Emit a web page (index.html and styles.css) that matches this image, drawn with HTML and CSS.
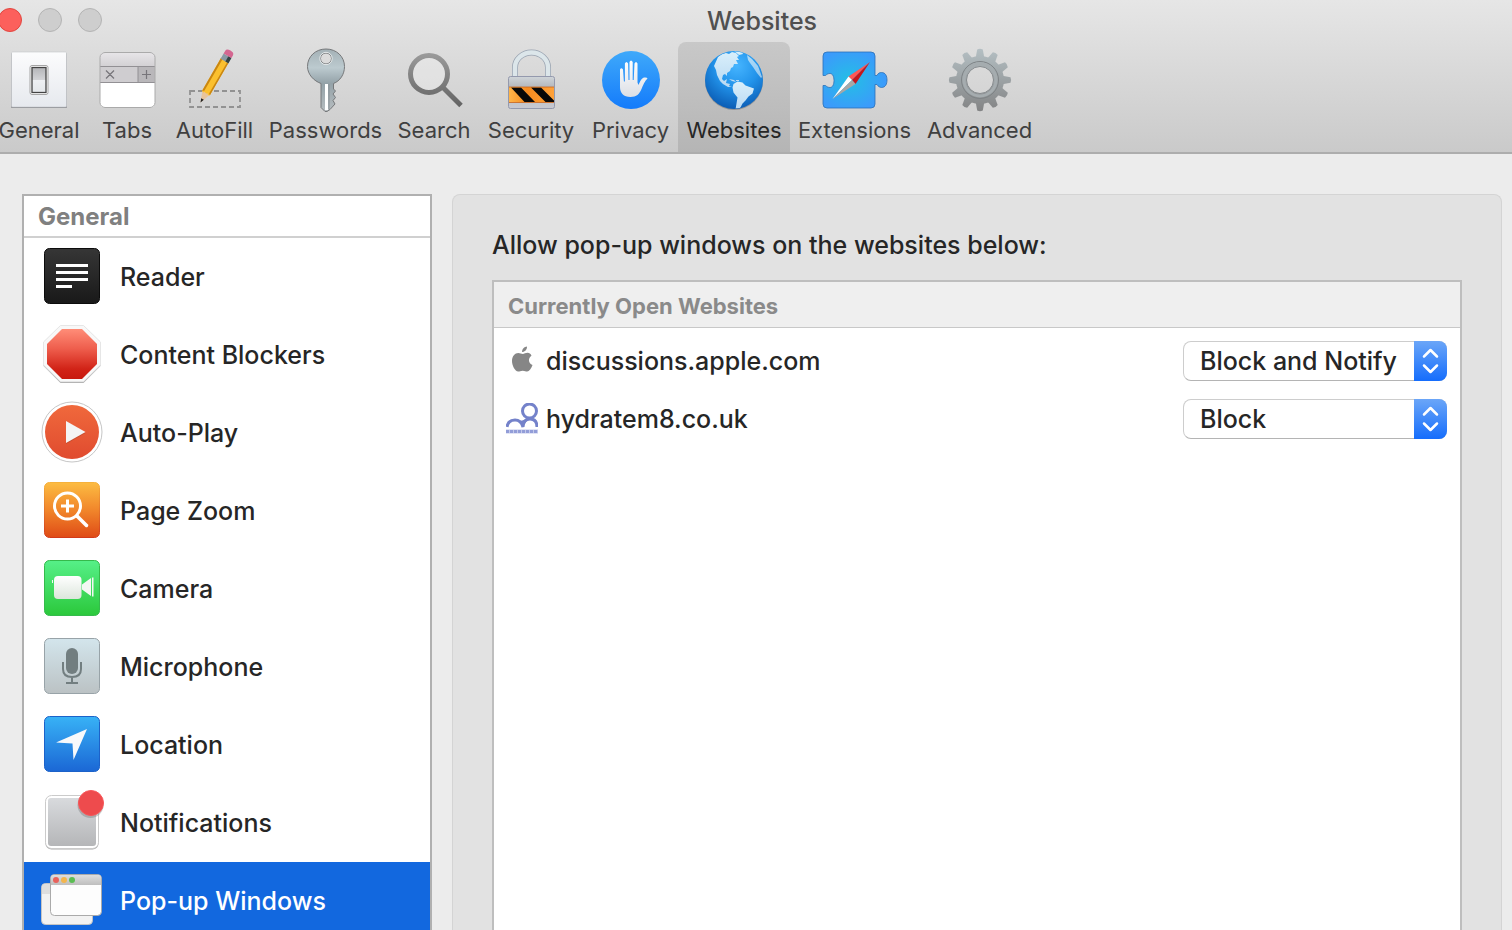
FILE: index.html
```html
<!DOCTYPE html>
<html lang="en">
<head>
<meta charset="utf-8">
<title>Websites</title>
<link rel="stylesheet" href="styles.css">
</head>
<body>
<header class="header">
  <div class="titlebar">
    <div class="lights">
      <button class="light light-close" aria-label="Close"></button>
      <button class="light" aria-label="Minimize"></button>
      <button class="light" aria-label="Zoom"></button>
    </div>
    <h1 class="title">Websites</h1>
  </div>
  <nav class="toolbar" aria-label="Preferences">
    <button class="tool">
      <svg class="tool-icon" viewBox="0 0 72 64">
        <defs>
          <linearGradient id="gen" x2="0" y2="1"><stop stop-color="#fcfcfd"/><stop offset="1" stop-color="#e6e9ee"/></linearGradient>
          <linearGradient id="sw" x2="0" y2="1"><stop stop-color="#b4b5b8"/><stop offset=".48" stop-color="#d2d3d6"/><stop offset=".5" stop-color="#eef0f3"/><stop offset="1" stop-color="#e4e7ea"/></linearGradient>
        </defs>
        <rect x="8" y="5" width="56" height="55" rx="1" fill="#8c8e92"/>
        <rect x="8.500" y="4" width="55" height="55" rx="1" fill="url(#gen)" stroke="#c4c6ca" stroke-width=".600"/>
        <rect x="27" y="17.500" width="18" height="29" rx="2" fill="#fff" stroke="#a5a5a5"/>
        <rect x="29" y="19.500" width="14" height="25" fill="url(#sw)" stroke="#444" stroke-width="1.300"/>
      </svg>
      <span>General</span>
    </button>
    <button class="tool">
      <svg class="tool-icon" viewBox="0 0 72 64">
        <defs>
          <linearGradient id="tb" x2="0" y2="1"><stop stop-color="#e8e6e9"/><stop offset="1" stop-color="#d3d1d4"/></linearGradient>
          <clipPath id="tabclip"><rect x="9" y="4" width="55" height="56" rx="5"/></clipPath>
        </defs>
        <g clip-path="url(#tabclip)">
          <path fill="#fff" d="M9 4h55v56H9z"/>
          <path fill="url(#tb)" d="M9 4h55v14H9z"/>
          <path fill="#cfcdd0" d="M9 18h55v16H9z"/>
          <path fill="#b9b7ba" d="M47 18h17v16H47z"/>
          <path fill="none" stroke="#929094" d="M9 18.500h55M9 34.500h55M47 18v16"/>
        </g>
        <rect x="9" y="4.500" width="55" height="55" rx="5" fill="none" stroke="#aaa"/>
        <path d="M15 22.500l8 8m0-8l-8 8M51 26.500h9M55.500 22v9" fill="none" stroke="#77757a" stroke-width="1.200"/>
      </svg>
      <span>Tabs</span>
    </button>
    <button class="tool">
      <svg class="tool-icon" viewBox="0 0 72 64">
        <rect x="11" y="43" width="50" height="16" fill="none" stroke="#929292" stroke-width="1.800" stroke-dasharray="5 3"/>
        <g transform="translate(21.500 54.500) rotate(30)">
          <path d="M0 0L-4.500-12h9z" fill="#e8c49c"/>
          <path d="M0 0L-1.500-4h3z" fill="#222"/>
          <path d="M-4.500-11V-49h9v38q-2 2-3-.500-1.500 2-3 0-1 2.500-3 .500z" fill="#fbc02e"/>
          <path d="M-4.500-11V-49h2v37zM3-49h1.500v38L3-12z" fill="#c98612"/>
          <path d="M-4.500-54h9v6h-9z" fill="#8999a4"/>
          <path d="M1-54h3.500v6H1z" fill="#334444"/>
          <path d="M-4.500-54v-3q0-3 4.500-3t4.500 3v3z" fill="#d46791"/>
        </g>
      </svg>
      <span>AutoFill</span>
    </button>
    <button class="tool">
      <svg class="tool-icon" viewBox="0 0 72 64">
        <defs><linearGradient id="key" x2="0" y2="1"><stop stop-color="#a4b1b6"/><stop offset=".3" stop-color="#bccacf"/><stop offset=".55" stop-color="#94a2a8"/><stop offset="1" stop-color="#b7bdc0"/></linearGradient></defs>
        <path fill-rule="evenodd" d="M36 1c10.500 0 18.500 7.500 18.500 17.500 0 8-4.500 14.500-11 17v5.500l2 2-2.500 3 2.500 3.500-2.500 3 2 3.500-5 5.500-3 2h-2l-4-4V35.500c-7-2.500-13.500-9-13.500-17C17.500 8.500 25.500 1 36 1zm0 4a5.500 5.500 0 1 0 0 11 5.500 5.500 0 0 0 0-11z" fill="url(#key)" stroke="#76787a"/>
        <circle cx="36" cy="10.500" r="6.200" fill="none" stroke="#e4e9ea"/>
        <path d="M35 36h3v26h-3z" fill="#fff"/>
        <path d="M39 36v25" stroke="#899196"/>
      </svg>
      <span>Passwords</span>
    </button>
    <button class="tool">
      <svg class="tool-icon" viewBox="0 0 72 64">
        <defs><linearGradient id="mag" gradientUnits="userSpaceOnUse" x1="0" y1="5" x2="0" y2="58"><stop stop-color="#9b9b9b"/><stop offset="1" stop-color="#646464"/></linearGradient></defs>
        <circle cx="31" cy="26" r="18.500" fill="#fff" fill-opacity=".25" stroke="url(#mag)" stroke-width="5"/>
        <path d="M44.500 39L63 57.500" stroke="url(#mag)" stroke-width="5"/>
      </svg>
      <span>Search</span>
    </button>
    <button class="tool">
      <svg class="tool-icon" viewBox="0 0 72 64">
        <defs>
          <linearGradient id="lk" x2="0" y2="1"><stop stop-color="#d0d5d9"/><stop offset=".3" stop-color="#b6babf"/><stop offset="1" stop-color="#c7c9d2"/></linearGradient>
          <linearGradient id="or"><stop stop-color="#ffb54a"/><stop offset=".4" stop-color="#f58a1f"/><stop offset="1" stop-color="#ffa23a"/></linearGradient>
        </defs>
        <path d="M20 29V19.500a16.500 15 0 0 1 33 0V29" fill="none" stroke="#98a2b0" stroke-width="6"/>
        <path d="M20 29V19.500a16.500 15 0 0 1 33 0V29" fill="none" stroke="#dce6ea" stroke-width="4.500"/>
        <rect x="13.500" y="28.500" width="46" height="32" rx="2" fill="url(#lk)" stroke="#9499ad"/>
        <path d="M14 39h45v15.500H14z" fill="url(#or)"/>
        <path d="M16 39.500h10l14 14.500H29.500zM36 39.500h10l13 13v1.500h-8.500z" fill="#080808"/>
        <path d="M14 39h45M14 54.500h45" stroke="#c86420" stroke-width=".800"/>
      </svg>
      <span>Security</span>
    </button>
    <button class="tool">
      <svg class="tool-icon" viewBox="0 0 72 64">
        <defs>
          <linearGradient id="pv" x2="0" y2="1"><stop stop-color="#3fa9fa"/><stop offset="1" stop-color="#147bfb"/></linearGradient>
          <linearGradient id="hd" x2="0" y2="1"><stop stop-color="#fff"/><stop offset="1" stop-color="#dcdfe5"/></linearGradient>
        </defs>
        <circle cx="36" cy="32" r="29" fill="url(#pv)"/>
        <path d="M25 21.500q1.300-2.500 3 0l.900 12h1V15.500q1.500-3 3.200 0L33.500 32h1V14q1.500-3 3.200 0v18h1l.8-16.500q1.500-3 3 0V34.500l1 2.500c1.500-3 2.500-6.500 5.500-7.500q3-.5 3.500 1c-3 2.500-4.500 7-6 10.500-2 5-5 8-11 8-7 0-10.500-4-10.500-10z" fill="url(#hd)"/>
      </svg>
      <span>Privacy</span>
    </button>
    <button class="tool tool-selected" aria-current="page">
      <svg class="tool-icon" viewBox="0 0 72 64">
        <defs>
          <radialGradient id="gl" cx=".55" cy=".25" r=".75"><stop stop-color="#46b5ff"/><stop offset=".5" stop-color="#2293ea"/><stop offset="1" stop-color="#0b5db5"/></radialGradient>
          <linearGradient id="land" x2="0" y2="1"><stop stop-color="#d9effb"/><stop offset="1" stop-color="#b9d9f2"/></linearGradient>
          <clipPath id="glclip"><circle cx="36" cy="32" r="28.500"/></clipPath>
        </defs>
        <circle cx="36" cy="33" r="29" fill="#555" opacity=".4"/>
        <circle cx="36" cy="32" r="29" fill="url(#gl)"/>
        <g clip-path="url(#glclip)" fill="url(#land)">
          <path d="M20 9l4-3 4-1 3 1 3-2 4 1 3 3-2 1 2 3-3 0 2 4-4 0-1 3-2 1-1 3-3 2 0 3-2-2-2 1-1 4 2 2 3-2-1 4 4 1-1 2 3 1-4 0-5-3-3-3-3-6-1-5-2-4z"/>
          <path d="M35.500 36l4-2.500 5 1 3 3 8.500 3-1.500 5-4 3-3 4-3 3-2 4-2 2-3 0 2-12-4-5-1-5z"/>
          <path d="M49 7l5 4 6 7 4 11-1 1-4-5-4-6-3-4-2-3z" opacity=".75"/>
          <path d="M31 31l5 1 2 2-4-1zM38 32l3 0 0 1-3 0zM36 3l8 1 1 2-4 1z"/>
        </g>
      </svg>
      <span>Websites</span>
    </button>
    <button class="tool">
      <svg class="tool-icon" viewBox="0 0 72 64">
        <defs><radialGradient id="ex" cx=".42" cy=".5" r=".55"><stop stop-color="#23bfe5"/><stop offset="1" stop-color="#3b9bfb"/></radialGradient></defs>
        <path d="M8 4h44a4 4 0 0 1 4 4v19.500h2c1-2.500 3-3 4.500-3 4 0 5.500 3.500 5.500 7.500s-1.500 7.500-5.500 7.500c-1.500 0-3.500-1-4.500-3h-2V56a4 4 0 0 1-4 4H8a4 4 0 0 1-4-4V37.500h2.500c1.500 1.500 3 2 4.500 2 2.500 0 4-3 4-7s-1.500-7-4-7c-1.500 0-3 .5-4.500 2H4V8a4 4 0 0 1 4-4z" fill="url(#ex)" stroke="#2c70b6" stroke-width=".800"/>
        <path d="M51 14L29.500 28.500 33 32z" fill="#ff5654"/><path d="M51 14L33 32l3.500 4z" fill="#c5161c"/>
        <path d="M13.500 51l16-22.500L33 32z" fill="#fff"/><path d="M13.500 51L33 32l3.500 4z" fill="#a9a7a6"/>
      </svg>
      <span>Extensions</span>
    </button>
    <button class="tool">
      <svg class="tool-icon" viewBox="0 0 72 64">
        <defs>
          <linearGradient id="gr" gradientUnits="userSpaceOnUse" x1="0" y1="1" x2="0" y2="63"><stop stop-color="#b4bfc3"/><stop offset="1" stop-color="#838485"/></linearGradient>
          <path id="tooth" d="M-4.500 11L-2.800 1.500Q0 .200 2.800 1.500L4.500 11z"/>
          <mask id="gearmask">
            <g fill="#fff" transform="translate(36 0)">
              <use href="#tooth"/><use href="#tooth" transform="rotate(30 0 32)"/><use href="#tooth" transform="rotate(60 0 32)"/><use href="#tooth" transform="rotate(90 0 32)"/><use href="#tooth" transform="rotate(120 0 32)"/><use href="#tooth" transform="rotate(150 0 32)"/><use href="#tooth" transform="rotate(180 0 32)"/><use href="#tooth" transform="rotate(210 0 32)"/><use href="#tooth" transform="rotate(240 0 32)"/><use href="#tooth" transform="rotate(270 0 32)"/><use href="#tooth" transform="rotate(300 0 32)"/><use href="#tooth" transform="rotate(330 0 32)"/>
              <circle cy="32" r="24"/>
            </g>
            <circle cx="36" cy="32" r="13.500"/>
          </mask>
        </defs>
        <path d="M0 0h72v64H0z" fill="url(#gr)" mask="url(#gearmask)"/>
        <circle cx="36" cy="32" r="18.500" fill="none" stroke="#7e8386"/>
        <circle cx="36" cy="32" r="16" fill="none" stroke="#a5acaf" stroke-width="3"/>
        <circle cx="36" cy="32" r="13.500" fill="none" stroke="#858a8d"/>
      </svg>
      <span>Advanced</span>
    </button>
  </nav>
</header>

<main class="content">
  <nav class="sidebar" aria-label="Website settings">
    <h2 class="sidebar-heading">General</h2>
    <button class="entry">
      <svg class="entry-icon" viewBox="0 0 64 64">
        <defs><linearGradient id="rd" x2="0" y2="1"><stop stop-color="#363636"/><stop offset="1" stop-color="#191919"/></linearGradient></defs>
        <rect x="4.500" y="3.500" width="55" height="55" rx="5" fill="url(#rd)" stroke="#0c0c0c"/>
        <path d="M16 20.500h32M16 27.500h32M16 34.500h32M16 41.500h16" stroke="#fff" stroke-width="3"/>
      </svg>
      Reader
    </button>
    <button class="entry">
      <svg class="entry-icon" viewBox="0 0 64 64">
        <defs><linearGradient id="st" x2="0" y2="1"><stop stop-color="#ff8d78"/><stop offset=".4" stop-color="#ee5d4c"/><stop offset=".8" stop-color="#d12317"/><stop offset="1" stop-color="#c8190f"/></linearGradient></defs>
        <path d="M20.500 4h23L60.500 20v23L43.500 60h-23L3.500 43V20z" fill="#b4b4b4"/>
        <path d="M20.500 2.500h23L60.500 19v23L43.500 58.500h-23L3.500 42V19z" fill="#f8f8f8" stroke="#e6e6e6"/>
        <path d="M22 6h20l15 15v20L42 56H22L7 41V21z" fill="url(#st)"/>
      </svg>
      Content Blockers
    </button>
    <button class="entry">
      <svg class="entry-icon" viewBox="0 0 64 64">
        <defs><linearGradient id="ap" x2="0" y2="1"><stop stop-color="#f0693c"/><stop offset="1" stop-color="#e04b2f"/></linearGradient></defs>
        <circle cx="32" cy="31" r="30" fill="#fff" stroke="#c6c6c6"/>
        <circle cx="32" cy="31" r="27" fill="url(#ap)"/>
        <path d="M26 21l19.500 11L26 43z" fill="#a73f27" opacity=".5"/>
        <path d="M26 20l19.500 11L26 42z" fill="#f4f4f4"/>
      </svg>
      Auto-Play
    </button>
    <button class="entry">
      <svg class="entry-icon" viewBox="0 0 64 64">
        <defs>
          <linearGradient id="pz" x2="0" y2="1"><stop stop-color="#fcbc42"/><stop offset=".5" stop-color="#f1862b"/><stop offset="1" stop-color="#df4b16"/></linearGradient>
          <linearGradient id="pe" x2="0" y2="1"><stop stop-color="#f6b13c"/><stop offset="1" stop-color="#d23a1a"/></linearGradient>
        </defs>
        <rect x="4.500" y="3.500" width="55" height="55" rx="5" fill="url(#pz)" stroke="url(#pe)"/>
        <circle cx="27.500" cy="27" r="13" fill="none" stroke="#fff" stroke-width="3"/>
        <path d="M37 37l9.500 9.500" stroke="#fff" stroke-width="3.500" stroke-linecap="round"/>
        <path d="M21 27h13M27.500 20.500v13" stroke="#fff" stroke-width="3"/>
      </svg>
      Page Zoom
    </button>
    <button class="entry">
      <svg class="entry-icon" viewBox="0 0 64 64">
        <defs>
          <linearGradient id="cm" x2="0" y2="1"><stop stop-color="#56f088"/><stop offset="1" stop-color="#2bc83b"/></linearGradient>
          <linearGradient id="cb" x2="0" y2="1"><stop stop-color="#fff"/><stop offset="1" stop-color="#dce6dc"/></linearGradient>
        </defs>
        <rect x="4.500" y="3.500" width="55" height="55" rx="5" fill="url(#cm)" stroke="#35ba4c"/>
        <rect x="14" y="19" width="27.500" height="23" rx="4" fill="url(#cb)"/>
        <path d="M42 27.500l9-6.500v18l-9-6.500zM52 20.500h1.500v19H52zM12 23h1v3h-1z" fill="#f3f7f3"/>
      </svg>
      Camera
    </button>
    <button class="entry">
      <svg class="entry-icon" viewBox="0 0 64 64">
        <defs><linearGradient id="mc" x2="0" y2="1"><stop stop-color="#d3e5ec"/><stop offset="1" stop-color="#bbc2c4"/></linearGradient></defs>
        <rect x="4.500" y="3.500" width="55" height="55" rx="5" fill="url(#mc)" stroke="#98a3a8"/>
        <rect x="26" y="13" width="12" height="26" rx="6" fill="#727e80"/>
        <path d="M23 27v7c0 6 4 8 9 8s9-2 9-8v-7M32 42v6M26 48h12" fill="none" stroke="#727e80" stroke-width="2"/>
      </svg>
      Microphone
    </button>
    <button class="entry">
      <svg class="entry-icon" viewBox="0 0 64 64">
        <defs><linearGradient id="lc" x2="0" y2="1"><stop stop-color="#38b2f6"/><stop offset="1" stop-color="#1b67d5"/></linearGradient></defs>
        <rect x="4.500" y="3.500" width="55" height="55" rx="5" fill="url(#lc)" stroke="#1c62c9"/>
        <path d="M47 16L33.500 47 32.500 30.500 16 29.500z" fill="#f7f9fb"/>
      </svg>
      Location
    </button>
    <button class="entry">
      <svg class="entry-icon" viewBox="0 0 64 64">
        <defs><linearGradient id="nt" x2="0" y2="1"><stop stop-color="#d8dadd"/><stop offset="1" stop-color="#b5b6b8"/></linearGradient></defs>
        <rect x="5.500" y="5.500" width="53" height="53" rx="6" fill="#aaa"/>
        <rect x="5.500" y="4.500" width="53" height="53" rx="6" fill="#fff" stroke="#cbcbcb"/>
        <rect x="8" y="7" width="48" height="48" rx="3" fill="url(#nt)"/>
        <circle cx="50.500" cy="14" r="13" fill="#777" opacity=".4"/>
        <circle cx="51" cy="12" r="12.500" fill="#ee4b4d" stroke="#f85558"/>
      </svg>
      Notifications
    </button>
    <button class="entry entry-selected" aria-current="true">
      <svg class="entry-icon" viewBox="0 0 64 64">
        <defs><linearGradient id="pw" x2="0" y2="1"><stop stop-color="#dedede"/><stop offset="1" stop-color="#bebebe"/></linearGradient></defs>
        <rect x="1.500" y="14.500" width="51" height="41" rx="4" fill="#f2f2f2" stroke="#c4c4c4"/>
        <path d="M2 25v-6q0-4 4-4h4v10z" fill="#dedede"/>
        <rect x="10.500" y="5.500" width="51" height="41" rx="4" fill="#fdfdfd" stroke="#aaa"/>
        <path d="M11 16V9q0-3 3-3h44q3 0 3 3v7z" fill="url(#pw)"/>
        <circle cx="16" cy="11" r="3" fill="#e9625c"/><circle cx="24" cy="11" r="3" fill="#f3b64e"/><circle cx="32" cy="11" r="3" fill="#5bbd53"/>
      </svg>
      Pop-up Windows
    </button>
  </nav>

  <section class="panel">
    <h2 class="panel-title">Allow pop-up windows on the websites below:</h2>
    <div class="sites">
      <h3 class="sites-heading">Currently Open Websites</h3>
      <ul class="site-list">
        <li class="site">
          <svg class="site-icon" viewBox="0 0 32 32">
            <path d="M21 1.500c.2 3-2.200 5.500-4.900 5.500-.2-2.700 2.200-5.300 4.900-5.500zM25.500 10.800c-3.700 2.500-3.200 7.700 1 9.200-1.200 3.500-3.200 6.500-5.300 6.500-1.500 0-2.300-.8-4.500-.8s-3 .8-4.500.8c-3.200 0-6.200-6-6.200-10.500 0-5 3-8 6.300-8 1.800 0 3 1 4.500 1 1.400 0 2.700-1.200 4.900-1.200 1.500 0 2.900.8 3.800 3z" fill="#868686"/>
          </svg>
          <label class="site-name" for="apple">discussions.apple.com</label>
          <span class="picker">
            <select class="picker-select" id="apple"><option>Block and Notify</option><option>Block</option><option>Allow</option></select>
            <svg class="picker-arrows" viewBox="0 0 33 40"><path d="M10 15.500L16.500 9l6.500 6.500M10 24.500l6.500 6.500 6.500-6.500" fill="none" stroke="#fff" stroke-width="2.500" stroke-linecap="round" stroke-linejoin="round"/></svg>
          </span>
        </li>
        <li class="site">
          <svg class="site-icon" viewBox="0 0 32 32">
            <g fill="none" stroke="#7482ca" stroke-width="3">
              <circle cx="23.500" cy="8" r="7"/>
              <path d="M1 24q1-7 8-7 6 0 8 7 0-8 7-8t7 8"/>
            </g>
            <path d="M14 18l3 6 5-8z" fill="#7482ca"/>
            <path d="M0 26.500h32v4H0z" fill="#c3c9ea"/>
            <path d="M0 28.500h32" stroke="#929dd8" stroke-dasharray="3 1" stroke-width="3"/>
          </svg>
          <label class="site-name" for="hydrate">hydratem8.co.uk</label>
          <span class="picker">
            <select class="picker-select" id="hydrate"><option>Block</option><option>Block and Notify</option><option>Allow</option></select>
            <svg class="picker-arrows" viewBox="0 0 33 40"><path d="M10 15.500L16.500 9l6.500 6.500M10 24.500l6.500 6.500 6.500-6.500" fill="none" stroke="#fff" stroke-width="2.500" stroke-linecap="round" stroke-linejoin="round"/></svg>
          </span>
        </li>
      </ul>
    </div>
  </section>
</main>
</body>
</html>
```
FILE: styles.css
```css
* { box-sizing: border-box; }

body {
  margin: 0;
  height: 100vh;
  display: flex;
  flex-direction: column;
  overflow: hidden;
  background: #ececec;
  color: #262626;
  font: 450 25px/32px Inter, "Liberation Sans", sans-serif;
}

h1, h2, h3, ul { margin: 0; padding: 0; font-size: inherit; }
ul { list-style: none; }
button { margin: 0; border: 0; background: none; font: inherit; color: inherit; }

.header {
  flex: none;
  background: linear-gradient(#e6e6e6, #cacaca);
  border-bottom: 2px solid #adadad;
}

.titlebar {
  height: 42px;
  display: grid;
  grid-template-columns: 1fr auto 1fr;
  align-items: center;
  padding-left: 12px;
}
.lights { display: flex; gap: 16px; margin: 0 0 2px -14px; }
.light {
  width: 24px;
  height: 24px;
  padding: 0;
  border: 1px solid #b4b4b4;
  border-radius: 50%;
  background: #cecece;
}
.light-close { background: #fc605c; border-color: #e2463f; }
.title { font-size: 25px; font-weight: inherit; color: #505050; }

.toolbar {
  display: grid;
  grid-template-columns: 96px 80px 95px 127px 90px 104px 95px 112px 129px 121px;
  margin-left: -9px;
}
.tool {
  height: 110px;
  padding: 6px 0 0;
  display: flex;
  flex-direction: column;
  align-items: center;
  gap: 4px;
  font-size: 22px;
  line-height: 28px;
  font-weight: 400;
  color: #404040;
  white-space: nowrap;
}
.tool-selected { background: linear-gradient(#c8c8c8, #b5b5b5); border-radius: 8px 8px 0 0; color: #262626; }
.tool-icon { width: 72px; height: 64px; flex: none; overflow: visible; }

.content {
  flex: 1;
  min-height: 0;
  display: grid;
  grid-template-columns: 410px 1fr;
  gap: 20px;
  padding: 40px 10px 0 22px;
}

.sidebar { background: #fff; border: 2px solid #b0b0b0; border-bottom: 0; overflow: hidden; }
.sidebar-heading {
  height: 42px;
  padding: 0 14px;
  border-bottom: 2px solid #d0d0d0;
  font-size: 24px;
  line-height: 42px;
  font-weight: 700;
  color: #808080;
}
.entry {
  width: 100%;
  height: 78px;
  padding: 0 16px;
  display: flex;
  align-items: center;
  gap: 16px;
  text-align: left;
}
.entry-icon { width: 64px; height: 64px; flex: none; overflow: visible; }
.entry-selected { background: #1268df; color: #fff; }

.panel {
  display: flex;
  flex-direction: column;
  padding: 34px 39px 0;
  background: #e2e2e2;
  border: 1px solid #d4d4d4;
  border-bottom: 0;
  border-radius: 8px 8px 0 0;
}
.panel-title { font-weight: inherit; }
.sites { flex: 1; margin-top: 19px; background: #fff; border: 2px solid #bebebe; border-bottom: 0; }
.sites-heading {
  height: 46px;
  padding: 2px 14px 0;
  background: #efefef;
  border-bottom: 1px solid #c8c8c8;
  font-size: 22px;
  line-height: 44px;
  font-weight: 700;
  color: #8a8a8a;
}
.site-list { padding: 4px 13px 0 12px; }
.site { height: 58px; display: flex; align-items: center; gap: 8px; }
.site-icon { width: 32px; height: 32px; flex: none; }
.site-name { flex: 1; }

.picker { position: relative; width: 264px; height: 40px; }
.picker-select {
  appearance: none;
  width: 100%;
  height: 100%;
  padding: 0 40px 0 16px;
  border: 1px solid #cdcdcd;
  border-bottom-color: #b4b4b4;
  border-radius: 8px;
  background: #fff;
  font: inherit;
  color: inherit;
}
.picker-arrows {
  position: absolute;
  top: 0;
  right: 0;
  width: 33px;
  height: 40px;
  border-radius: 0 8px 8px 0;
  background: linear-gradient(#6ba6f8, #156dfc);
  pointer-events: none;
}
```
